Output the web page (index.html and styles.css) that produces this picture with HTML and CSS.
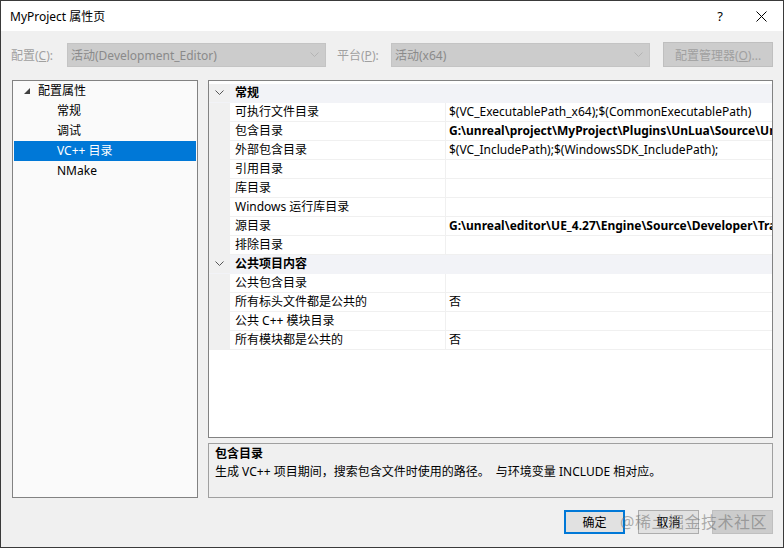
FILE: index.html
```html
<!DOCTYPE html>
<html lang="zh-CN">
<head>
  <meta charset="UTF-8" />
  <title>MyProject 属性页</title>
  <link rel="stylesheet" href="styles.css">
</head>
<body>
<div class="window">

  <!-- Title bar -->
  <div class="titlebar">
    <span class="title">MyProject 属性页</span>
    <span class="tb-btn help">?</span>
    <span class="tb-btn close">
      <svg width="11" height="11" viewBox="0 0 11 11"><path d="M0.5 0.5 L10.5 10.5 M10.5 0.5 L0.5 10.5" stroke="#000" stroke-width="1" fill="none"/></svg>
    </span>
  </div>

  <div class="content">
    <!-- Configuration row -->
    <div class="config-row">
      <span class="lbl lbl-cfg">配置(<u>C</u>):</span>
      <div class="combo">
        <span>活动(Development_Editor)</span>
        <svg class="chev" width="9" height="6" viewBox="0 0 9 6"><path d="M0.5 0.5 L4.5 4.5 L8.5 0.5" stroke="#b4b4b4" fill="none"/></svg>
      </div>
      <span class="lbl lbl-plat">平台(<u>P</u>):</span>
      <div class="combo">
        <span>活动(x64)</span>
        <svg class="chev" width="9" height="6" viewBox="0 0 9 6"><path d="M0.5 0.5 L4.5 4.5 L8.5 0.5" stroke="#b4b4b4" fill="none"/></svg>
      </div>
      <button class="btn btn-mgr" disabled>配置管理器(<u>O</u>)...</button>
    </div>

    <div class="panes">
      <!-- Tree -->
      <div class="tree">
        <div class="tree-item root">
          <svg class="tri" width="6" height="6" viewBox="0 0 6 6"><polygon points="6,0 6,6 0,6" fill="#404040"/></svg>
          <span>配置属性</span>
        </div>
        <div class="tree-item child">常规</div>
        <div class="tree-item child">调试</div>
        <div class="tree-item child selected">VC++ 目录</div>
        <div class="tree-item child">NMake</div>
      </div>

      <div class="right">
        <!-- Property grid -->
        <div class="grid">
          <div class="row cat">
            <span class="gutter"><svg width="9" height="6" viewBox="0 0 9 6"><path d="M0.5 0.5 L4.5 4.5 L8.5 0.5" stroke="#555" fill="none"/></svg></span>
            <span class="cat-name">常规</span>
          </div>
          <div class="row"><span class="gutter"></span><span class="name">可执行文件目录</span><span class="val">$(VC_ExecutablePath_x64);$(CommonExecutablePath)</span></div>
          <div class="row"><span class="gutter"></span><span class="name">包含目录</span><span class="val bold">G:\unreal\project\MyProject\Plugins\UnLua\Source\UnLua\Public;$(VC_IncludePath)</span></div>
          <div class="row"><span class="gutter"></span><span class="name">外部包含目录</span><span class="val">$(VC_IncludePath);$(WindowsSDK_IncludePath);</span></div>
          <div class="row"><span class="gutter"></span><span class="name">引用目录</span><span class="val"></span></div>
          <div class="row"><span class="gutter"></span><span class="name">库目录</span><span class="val"></span></div>
          <div class="row"><span class="gutter"></span><span class="name">Windows 运行库目录</span><span class="val"></span></div>
          <div class="row"><span class="gutter"></span><span class="name">源目录</span><span class="val bold">G:\unreal\editor\UE_4.27\Engine\Source\Developer\TraceServices\Public</span></div>
          <div class="row"><span class="gutter"></span><span class="name">排除目录</span><span class="val"></span></div>
          <div class="row cat">
            <span class="gutter"><svg width="9" height="6" viewBox="0 0 9 6"><path d="M0.5 0.5 L4.5 4.5 L8.5 0.5" stroke="#555" fill="none"/></svg></span>
            <span class="cat-name">公共项目内容</span>
          </div>
          <div class="row"><span class="gutter"></span><span class="name">公共包含目录</span><span class="val"></span></div>
          <div class="row"><span class="gutter"></span><span class="name">所有标头文件都是公共的</span><span class="val">否</span></div>
          <div class="row"><span class="gutter"></span><span class="name">公共 C++ 模块目录</span><span class="val"></span></div>
          <div class="row"><span class="gutter"></span><span class="name">所有模块都是公共的</span><span class="val">否</span></div>
        </div>

        <!-- Description -->
        <div class="desc">
          <div class="desc-title">包含目录</div>
          <div class="desc-text">生成 VC++ 项目期间，搜索包含文件时使用的路径。&nbsp; 与环境变量 INCLUDE 相对应。</div>
        </div>
      </div>
    </div>

    <!-- Footer buttons -->
    <div class="footer">
      <button class="btn btn-ok">确定</button>
      <button class="btn">取消</button>
      <button class="btn btn-apply" disabled></button>
    </div>

    <div class="watermark">@稀土掘金技术社区</div>
  </div>
</div>
</body>
</html>
```

FILE: styles.css
```css
html, body {
  margin: 0; padding: 0;
  background: #f0f0f0;
}

body {
  font-family: "Noto Sans", "Noto Sans CJK SC", sans-serif;
  font-size: 12px;
  color: #000;
}

.window {
  position: relative;
  width: 784px; height: 548px;
  box-sizing: border-box;
  border: 1px solid #3a3a3a;
  background: #f0f0f0;
  overflow: hidden;
}

/* Title bar */
.titlebar {
  height: 30px;
  background: #fff;
  display: flex;
  align-items: center;
}
.title { padding-left: 9px; font-size: 12px; flex: 1; }
.tb-btn { display: flex; align-items: center; justify-content: center; }
.help { width: 20px; margin-right: 23px; font-size: 13px; }
.close { width: 17px; margin-right: 13px; }

.content { position: relative; height: 515px; }

/* Config row */
.config-row {
  display: flex;
  align-items: center;
  height: 25px;
  padding-top: 11px;
  padding-left: 10px;
}
.lbl { color: #a0a0a0; }
.lbl u { text-decoration: underline; }
.lbl-cfg { width: 56px; }
.lbl-plat { width: 54px; margin-left: 11px; }

.combo {
  width: 259px; height: 24px;
  box-sizing: border-box;
  background: #cccccc;
  border: 1px solid #c4c4c4;
  color: #8a8a8a;
  display: flex;
  align-items: center;
  padding-left: 3px;
  padding-right: 6px;
}
.combo span { flex: 1; }

.btn {
  font: inherit;
  width: 61px; height: 24px;
  box-sizing: border-box;
  background: #e1e1e1;
  border: 1px solid #adadad;
  padding: 0;
  color: #000;
}
.btn-mgr {
  width: 110px; height: 25px;
  margin-left: 13px;
  background: #cccccc;
  border-color: #bfbfbf;
  color: #a0a0a0;
}

/* Panes */
.panes {
  display: flex;
  gap: 10px;
  margin-top: 13px;
  padding-left: 11px;
  height: 418px;
}

.tree {
  width: 186px;
  box-sizing: border-box;
  border: 1px solid #828282;
  background: #fafafa;
}
.tree-item {
  height: 20px;
  line-height: 20px;
  margin: 0 1px;
}
.tree-item.root { display: flex; align-items: center; }
.tree-item .tri { margin-left: 10px; margin-right: 8px; }
.tree-item.child { padding-left: 43px; }
.tree-item.selected { background: #0078d7; color: #fff; }

.right {
  width: 565px;
  display: flex;
  flex-direction: column;
  gap: 5px;
}

.grid {
  height: 358px;
  box-sizing: border-box;
  border: 1px solid #828282;
  background: #fff;
  padding-top: 3px;
  overflow: hidden;
}
.row {
  display: flex;
  height: 19px;
  box-sizing: border-box;
  border-bottom: 1px solid #f0f0f0;
  line-height: 18px;
  white-space: nowrap;
}
.gutter {
  width: 21px;
  flex: none;
  background: #f0f0f0;
  display: flex;
  align-items: center;
  justify-content: center;
}
.name {
  width: 210px;
  flex: none;
  padding-left: 5px;
  border-right: 1px solid #f0f0f0;
}
.val {
  flex: 1;
  padding-left: 3px;
  overflow: hidden;
}
.bold { font-weight: bold; }

.row.cat { background: #f2f3f7; border-bottom-color: #f2f3f7; }
.cat-name { padding-left: 5px; font-weight: bold; }

.desc {
  height: 55px;
  box-sizing: border-box;
  border: 1px solid #a0a0a0;
  padding: 1px 6px;
  line-height: 18px;
}
.desc-title { font-weight: bold; }

/* Footer */
.footer {
  display: flex;
  justify-content: flex-end;
  gap: 13px;
  margin-top: 12px;
  padding-right: 10px;
}
.btn-ok { border: 2px solid #0078d7; }
.btn-apply { background: #cccccc; border-color: #bfbfbf; }

.watermark {
  position: absolute;
  left: 619px; top: 478px;
  font-size: 16px;
  color: rgba(110, 110, 110, 0.55);
  letter-spacing: 0.5px;
  white-space: nowrap;
}
```
